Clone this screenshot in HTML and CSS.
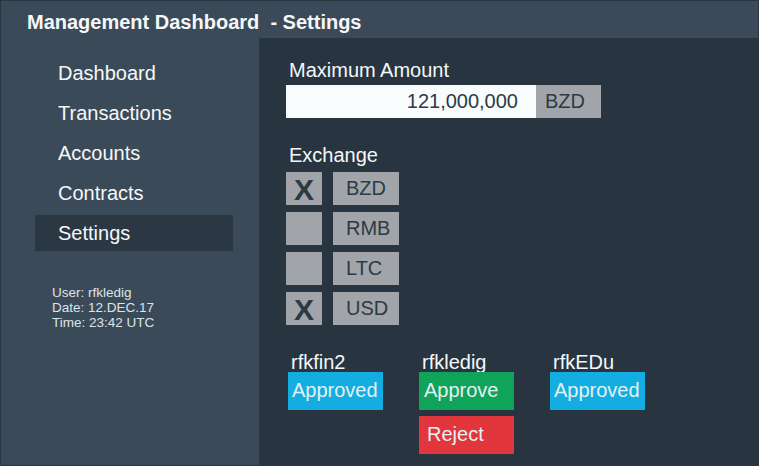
FILE: index.html
```html
<!DOCTYPE html>
<html>
<head>
<meta charset="utf-8">
<link rel="stylesheet" href="styles.css">
</head>
<body>
<div class="app">
  <header class="topbar"><h1 class="title">Management Dashboard&nbsp; - Settings</h1></header>
  <aside class="sidebar">
    <nav class="nav">
      <div class="nav-item">Dashboard</div>
      <div class="nav-item">Transactions</div>
      <div class="nav-item">Accounts</div>
      <div class="nav-item">Contracts</div>
      <div class="nav-item active">Settings</div>
    </nav>
    <div class="info">
      <div>User: rfkledig</div>
      <div>Date: 12.DEC.17</div>
      <div>Time: 23:42 UTC</div>
    </div>
  </aside>
  <main class="content">
    <div class="label">Maximum Amount</div>
    <div class="amount-row">
      <div class="amount-input">121,000,000</div>
      <div class="currency">BZD</div>
    </div>
    <div class="label exchange-label">Exchange</div>
    <div class="exchange">
      <div class="ex-row"><div class="check">X</div><div class="ex-name">BZD</div></div>
      <div class="ex-row"><div class="check"></div><div class="ex-name">RMB</div></div>
      <div class="ex-row"><div class="check"></div><div class="ex-name">LTC</div></div>
      <div class="ex-row"><div class="check">X</div><div class="ex-name">USD</div></div>
    </div>
    <div class="approvals">
      <div class="approver">
        <div class="name">rfkfin2</div>
        <div class="btn blue">Approved</div>
      </div>
      <div class="approver">
        <div class="name">rfkledig</div>
        <div class="btn green">Approve</div>
        <div class="btn red">Reject</div>
      </div>
      <div class="approver">
        <div class="name">rfkEDu</div>
        <div class="btn blue">Approved</div>
      </div>
    </div>
  </main>
</div>
</body>
</html>
```
FILE: styles.css
```css
* { box-sizing: border-box; }
html, body { margin: 0; padding: 0; }
body {
  font-family: "Liberation Sans", Arial, sans-serif;
  background: #283541;
  color: #f4f8fa;
}
.app {
  width: 759px;
  height: 466px;
  display: grid;
  grid-template-columns: 258px 1fr;
  grid-template-rows: 37px 1fr;
  border: 1px solid #2a3641;
  overflow: hidden;
}
.topbar {
  grid-column: 1 / 3;
  background: #3b4a58;
  padding-left: 26px;
  display: flex;
  align-items: center;
}
.title {
  margin: 0;
  font-size: 20px;
  font-weight: bold;
  color: #f4f8fa;
  line-height: 22px;
  padding-top: 4px;
}
.sidebar {
  background: #3b4a58;
  padding: 17px 0 0 34px;
}
.nav {
  display: flex;
  flex-direction: column;
  gap: 4px;
  width: 198px;
}
.nav-item {
  height: 36px;
  line-height: 36px;
  font-size: 20px;
  padding-left: 23px;
  color: #f4f8fa;
}
.nav-item.active { background: #2b3743; }
.info {
  margin-top: 34px;
  padding-left: 17px;
  font-size: 13.5px;
  line-height: 15px;
  color: #dde4e8;
}
.content {
  padding: 21px 0 0 27px;
}
.label {
  font-size: 20px;
  line-height: 22px;
  padding-left: 3px;
}
.amount-row {
  display: flex;
  margin-top: 4px;
  height: 33px;
}
.amount-input {
  width: 250px;
  background: #f8fcfd;
  color: #2c3a46;
  font-size: 20px;
  line-height: 33px;
  text-align: right;
  padding-right: 18px;
}
.currency {
  width: 65px;
  background: #a1a5a9;
  color: #2c3a46;
  font-size: 20px;
  line-height: 33px;
  padding-left: 9px;
}
.exchange-label { margin-top: 26px; }
.exchange {
  display: flex;
  flex-direction: column;
  gap: 7px;
  margin-top: 6px;
}
.ex-row {
  display: flex;
  gap: 11px;
  height: 33px;
}
.check {
  width: 36px;
  background: #a1a5a9;
  color: #2c3a46;
  font-size: 30px;
  font-weight: bold;
  line-height: 35px;
  text-align: center;
}
.ex-name {
  width: 66px;
  background: #a1a5a9;
  color: #2c3a46;
  font-size: 20px;
  line-height: 33px;
  padding-left: 13px;
}
.approvals {
  display: flex;
  gap: 36px;
  margin-top: 27px;
  padding-left: 2px;
}
.approver {
  width: 95px;
  display: flex;
  flex-direction: column;
}
.name {
  font-size: 20px;
  line-height: 20px;
  padding-left: 3px;
}
.btn {
  height: 38px;
  line-height: 36px;
  font-size: 20px;
  padding-left: 4px;
  color: #e4f1f3;
}
.btn.blue { background: #13ade2; }
.btn.green { background: #0fa45a; padding-left: 5px; }
.btn.red { background: #e2363d; margin-top: 6px; padding-left: 8px; }
```
